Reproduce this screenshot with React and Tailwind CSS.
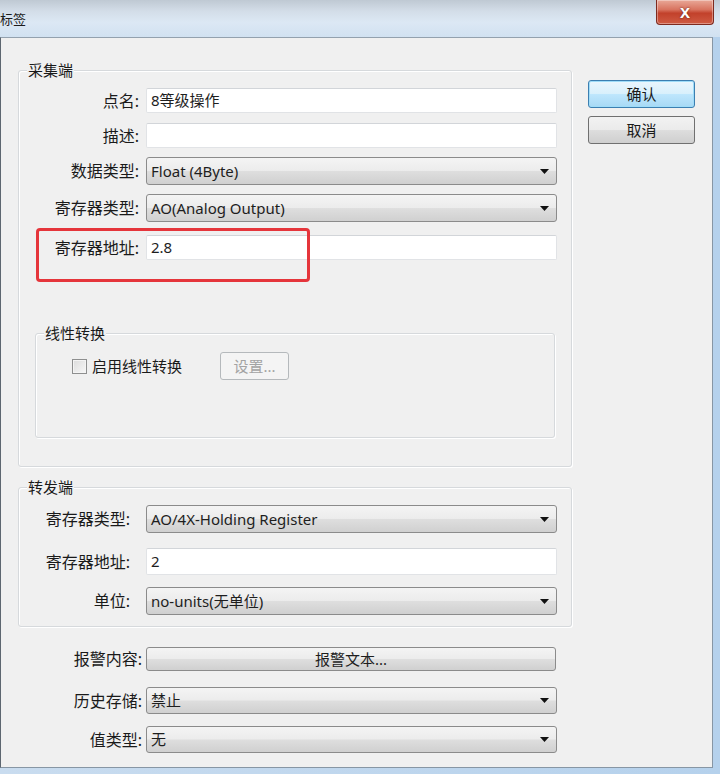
import React from "react";

const FONT = "font-['Noto_Sans','Noto_Sans_CJK_SC',sans-serif]";

function Arrow() {
  return (
    <svg width="9" height="5" viewBox="0 0 9 5" className="shrink-0">
      <path d="M0 0H9L4.5 5Z" fill="#111" />
    </svg>
  );
}

function Select({ value, h = "h-[28px]" }) {
  return (
    <div
      className={`${h} w-[411px] flex items-center justify-between rounded-[3px] border border-[#8b8b8b] bg-[linear-gradient(#f4f4f4_0%,#ececec_48%,#dedede_52%,#d0d0d0_100%)] pl-[4px] pr-[7px] text-[15px] text-[#1e1e1e]`}
    >
      <span className="leading-none">{value}</span>
      <Arrow />
    </div>
  );
}

function Input({ value, h = "h-[25px]" }) {
  return (
    <div
      className={`${h} w-[411px] flex items-center rounded-[2px] border border-[#e1e3e6] border-t-[#d2d5d9] bg-white pl-[4px] text-[15px] text-[#1e1e1e]`}
    >
      <span className="leading-none">{value}</span>
    </div>
  );
}

function Row({ label, labelW, gap, className = "", children }) {
  return (
    <div className={`flex items-center ${className}`}>
      <div
        className={`${labelW} ${gap} shrink-0 text-right text-[16px] text-[#1a1a1a] leading-none`}
      >
        {label}
      </div>
      {children}
    </div>
  );
}

function GroupLabel({ text }) {
  return (
    <div className="absolute left-[8px] -top-[10px] bg-[#f0f0f0] px-[1px] text-[15px] leading-[18px] text-[#1a1a1a]">
      {text}
    </div>
  );
}

export default function App() {
  return (
    <div
      className={`${FONT} w-[720px] h-[774px] overflow-hidden bg-[linear-gradient(90deg,#c9dcef,#b5d1ec)] flex flex-col pr-[7px] pb-[6px]`}
    >
      {/* Title bar */}
      <div className="h-[37px] w-[720px] -mr-[7px] flex items-start justify-between bg-[linear-gradient(#bfc9d3_0%,#d3dde8_30%,#dce8f4_60%,#d1e1f1_100%)]">
        <div className="pt-[12px] text-[13px] leading-[14px] text-[#1b1b1b]">标签</div>
        <div className="mr-[6px] h-[25px] w-[58px] flex items-center justify-center rounded-b-[4px] border border-t-0 border-[#7e2a1e] bg-[linear-gradient(#e9a898_0%,#d8735f_40%,#c2412b_55%,#cf5b43_100%)] shadow-[inset_0_0_0_1px_rgba(255,255,255,0.35)]">
          <span className="text-[15px] font-bold leading-none text-white [text-shadow:0_0_2px_#5a1a10]">X</span>
        </div>
      </div>

      {/* Client area */}
      <div className="flex-1 flex border-t border-l border-r border-b border-t-[#93a1ae] border-l-[#5d6670] border-r-[#8796a4] border-b-[#8796a4] bg-[#f0f0f0] pl-[17px]">
        {/* Left column */}
        <div className="w-[554px] flex flex-col">
          {/* 采集端 */}
          <div className="relative mt-[32px] h-[397px] rounded-[3px] border border-[#d6d9dc] shadow-[inset_1px_1px_0_#ffffff,1px_1px_0_#ffffff] pt-[17px]">
            <GroupLabel text="采集端" />
            <Row label="点名:" labelW="w-[120px]" gap="mr-[7px]">
              <Input value="8等级操作" />
            </Row>
            <Row label="描述:" labelW="w-[120px]" gap="mr-[7px]" className="mt-[10px]">
              <Input value="" />
            </Row>
            <Row label="数据类型:" labelW="w-[120px]" gap="mr-[7px]" className="mt-[9px]">
              <Select value="Float (4Byte)" />
            </Row>
            <Row label="寄存器类型:" labelW="w-[120px]" gap="mr-[7px]" className="mt-[9px]">
              <Select value="AO(Analog Output)" />
            </Row>
            <Row label="寄存器地址:" labelW="w-[120px]" gap="mr-[7px]" className="mt-[13px]">
              <Input value="2.8" />
            </Row>

            {/* 线性转换 */}
            <div className="relative ml-[16px] mt-[73px] h-[105px] w-[520px] rounded-[3px] border border-[#d6d9dc] shadow-[inset_1px_1px_0_#ffffff,1px_1px_0_#ffffff]">
              <GroupLabel text="线性转换" />
              <div className="flex items-center pl-[36px] pt-[18px]">
                <div className="h-[15px] w-[15px] border border-[#8e8f8f] bg-[linear-gradient(135deg,#dcdcdc,#f7f7f7)] shadow-[inset_0_0_0_1px_#f4f4f4]" />
                <span className="ml-[5px] text-[15px] leading-none text-[#1a1a1a]">启用线性转换</span>
                <div className="ml-[38px] h-[28px] w-[69px] flex items-center justify-center rounded-[3px] border border-[#b5b9bc] bg-[#f4f4f4] text-[15px] leading-none text-[#a3a3a3]">
                  设置...
                </div>
              </div>
            </div>

            {/* red highlight */}
            <div className="absolute left-[17px] top-[157px] h-[54px] w-[274px] rounded-[4px] border-[3px] border-[#e5353b]" />
          </div>

          {/* 转发端 */}
          <div className="relative mt-[20px] h-[140px] rounded-[3px] border border-[#d6d9dc] shadow-[inset_1px_1px_0_#ffffff,1px_1px_0_#ffffff] pt-[17px]">
            <GroupLabel text="转发端" />
            <Row label="寄存器类型:" labelW="w-[111px]" gap="mr-[16px]">
              <Select value="AO/4X-Holding Register" h="h-[28px]" />
            </Row>
            <Row label="寄存器地址:" labelW="w-[111px]" gap="mr-[16px]" className="mt-[15px]">
              <Input value="2" h="h-[27px]" />
            </Row>
            <Row label="单位:" labelW="w-[111px]" gap="mr-[16px]" className="mt-[12px]">
              <Select value="no-units(无单位)" />
            </Row>
          </div>

          {/* Outside rows */}
          <Row label="报警内容:" labelW="w-[124px]" gap="mr-[4px]" className="mt-[20px]">
            <div className="h-[24px] w-[410px] flex items-center justify-center rounded-[3px] border border-[#8b8b8b] bg-[linear-gradient(#f4f4f4_0%,#ececec_48%,#dedede_52%,#d0d0d0_100%)] text-[15px] leading-none text-[#1e1e1e]">
              报警文本...
            </div>
          </Row>
          <Row label="历史存储:" labelW="w-[124px]" gap="mr-[4px]" className="mt-[16px]">
            <Select value="禁止" h="h-[27px]" />
          </Row>
          <Row label="值类型:" labelW="w-[124px]" gap="mr-[4px]" className="mt-[12px]">
            <Select value="无" h="h-[27px]" />
          </Row>
        </div>

        {/* Right column: buttons */}
        <div className="ml-[16px] pt-[42px] flex flex-col gap-[8px]">
          <div className="h-[28px] w-[107px] flex items-center justify-center rounded-[3px] border border-[#3c7fb1] bg-[linear-gradient(#eaf6fd_0%,#d9f0fc_48%,#bee6fd_52%,#a7d9f5_100%)] shadow-[inset_0_0_0_1px_#9fdcf8] text-[15px] leading-none text-[#1a1a1a]">
            确认
          </div>
          <div className="h-[28px] w-[107px] flex items-center justify-center rounded-[3px] border border-[#707070] bg-[linear-gradient(#f2f2f2_0%,#ebebeb_48%,#dddddd_52%,#cfcfcf_100%)] text-[15px] leading-none text-[#1a1a1a]">
            取消
          </div>
        </div>
      </div>
    </div>
  );
}
